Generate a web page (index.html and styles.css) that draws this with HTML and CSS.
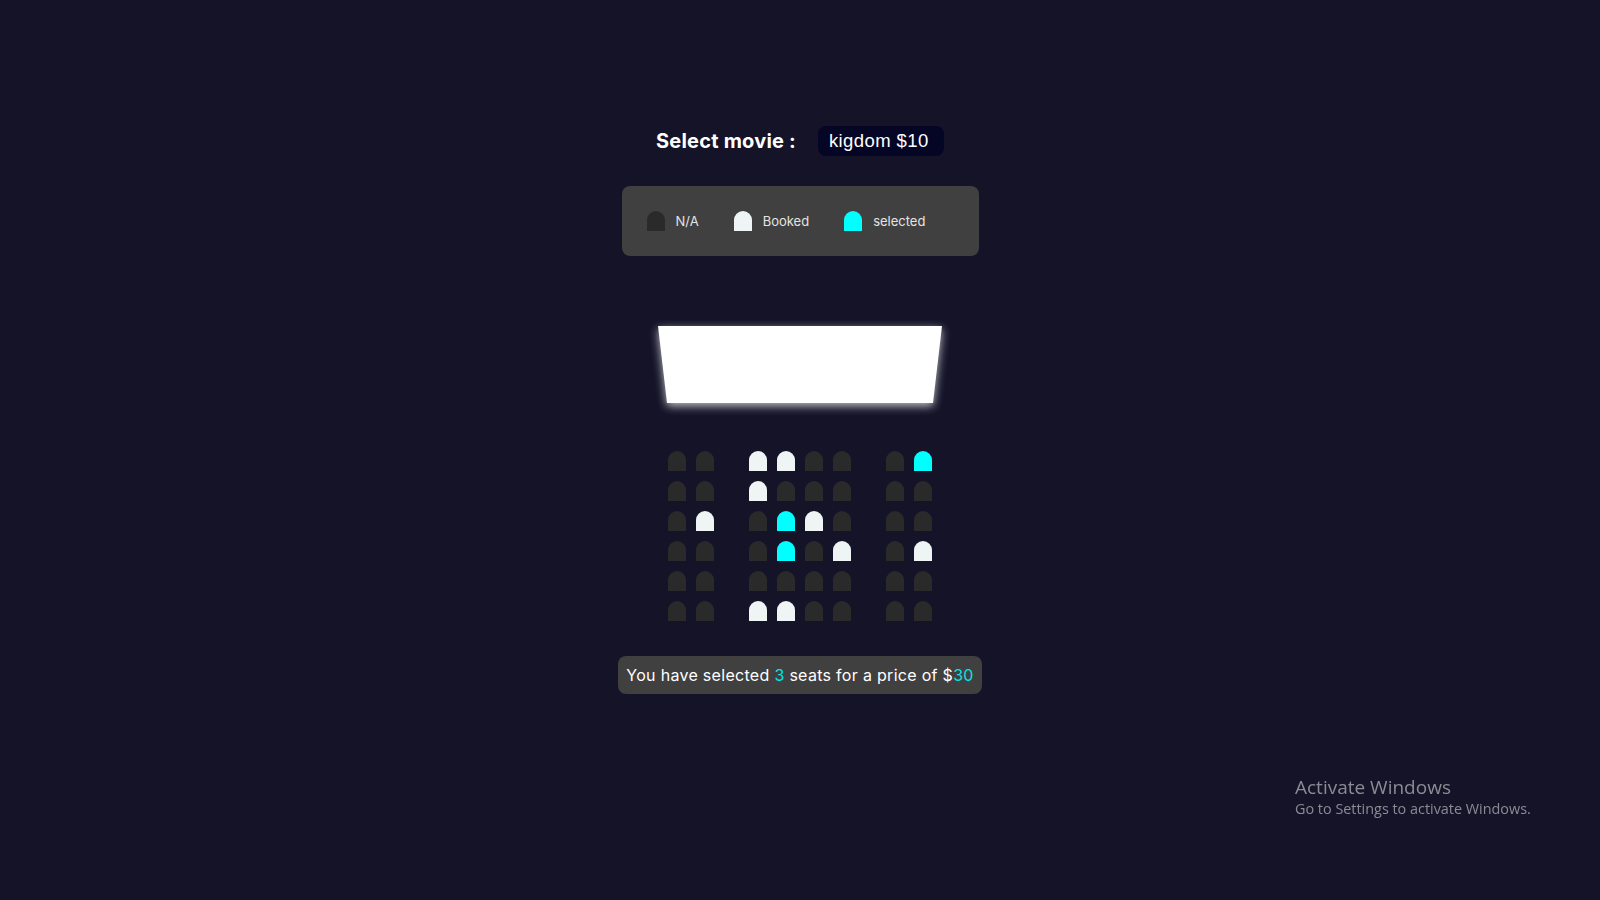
FILE: index.html
```html
<!DOCTYPE html>
<html lang="en">
<head>
<meta charset="utf-8">
<title>Movie Seat Booking</title>
<link rel="stylesheet" href="styles.css">
</head>
<body>
  <main class="app">
    <div class="movie-row">
      <label class="movie-label">Select movie :</label>
      <div class="movie-select">kigdom $10</div>
    </div>

    <ul class="legend">
      <li class="legend-item"><span class="seat seat--na"></span><small>N/A</small></li>
      <li class="legend-item"><span class="seat seat--booked"></span><small>Booked</small></li>
      <li class="legend-item"><span class="seat seat--selected"></span><small>selected</small></li>
    </ul>

    <div class="screen-wrap"><div class="screen"></div></div>

    <div class="hall">
      <div class="row">
        <span class="seat seat--na"></span><span class="seat seat--na"></span><span class="seat seat--booked"></span><span class="seat seat--booked"></span><span class="seat seat--na"></span><span class="seat seat--na"></span><span class="seat seat--na"></span><span class="seat seat--selected"></span>
      </div>
      <div class="row">
        <span class="seat seat--na"></span><span class="seat seat--na"></span><span class="seat seat--booked"></span><span class="seat seat--na"></span><span class="seat seat--na"></span><span class="seat seat--na"></span><span class="seat seat--na"></span><span class="seat seat--na"></span>
      </div>
      <div class="row">
        <span class="seat seat--na"></span><span class="seat seat--booked"></span><span class="seat seat--na"></span><span class="seat seat--selected"></span><span class="seat seat--booked"></span><span class="seat seat--na"></span><span class="seat seat--na"></span><span class="seat seat--na"></span>
      </div>
      <div class="row">
        <span class="seat seat--na"></span><span class="seat seat--na"></span><span class="seat seat--na"></span><span class="seat seat--selected"></span><span class="seat seat--na"></span><span class="seat seat--booked"></span><span class="seat seat--na"></span><span class="seat seat--booked"></span>
      </div>
      <div class="row">
        <span class="seat seat--na"></span><span class="seat seat--na"></span><span class="seat seat--na"></span><span class="seat seat--na"></span><span class="seat seat--na"></span><span class="seat seat--na"></span><span class="seat seat--na"></span><span class="seat seat--na"></span>
      </div>
      <div class="row">
        <span class="seat seat--na"></span><span class="seat seat--na"></span><span class="seat seat--booked"></span><span class="seat seat--booked"></span><span class="seat seat--na"></span><span class="seat seat--na"></span><span class="seat seat--na"></span><span class="seat seat--na"></span>
      </div>
    </div>

    <div class="summary"><p class="summary-text">You have selected <span class="hl">3</span> seats for a price of $<span class="hl">30</span></p></div>
  </main>

  <div class="watermark">
    <div class="wm-title">Activate Windows</div>
    <div class="wm-sub">Go to Settings to activate Windows.</div>
  </div>
</body>
</html>
```

FILE: styles.css
```css
* { box-sizing: border-box; }

html, body {
  margin: 0;
  padding: 0;
  height: 100%;
}

body {
  background: #141328;
  color: #fff;
  font-family: "Inter", "Open Sans", sans-serif;
  overflow: hidden;
}

.app {
  display: flex;
  flex-direction: column;
  align-items: center;
  padding-top: 126px;
}

.movie-row {
  display: flex;
  align-items: center;
  gap: 22px;
  height: 30px;
}

.movie-label {
  font-size: 20px;
  font-weight: 700;
  letter-spacing: 0.2px;
  color: #fff;
}

.movie-select {
  width: 126px;
  height: 30px;
  background: #050626;
  border-radius: 8px;
  display: flex;
  align-items: center;
  padding-left: 11px;
  font-family: "Liberation Sans", Arial, sans-serif;
  font-size: 18.5px;
  letter-spacing: 0.4px;
  color: #fff;
}

.legend {
  list-style: none;
  margin: 30px 0 0;
  width: 357px;
  height: 70px;
  padding: 0 25px;
  background: #404040;
  border-radius: 8px;
  display: flex;
  align-items: center;
  gap: 35px;
}

.legend-item {
  display: flex;
  align-items: center;
  gap: 11px;
}

.legend-item .seat { margin: 0; }

.legend-item small {
  font-size: 13px;
  color: #e4e4e4;
}

.screen-wrap {
  margin-top: 70px;
  filter: drop-shadow(0 3px 5px rgba(255, 255, 255, 0.75));
}

.screen {
  width: 284px;
  height: 77px;
  background: #fff;
  clip-path: polygon(0 0, 100% 0, calc(100% - 9px) 100%, 9px 100%);
}

.hall {
  margin-top: 43px;
  display: flex;
  flex-direction: column;
}

.row {
  display: flex;
}

.seat {
  display: block;
  width: 18px;
  height: 20px;
  margin: 5px;
  border-radius: 9px 9px 0 0;
  background: #2a2a2a;
}

.row .seat:nth-child(2) { margin-right: 30px; }
.row .seat:nth-child(7) { margin-left: 30px; }

.seat--na { background: #2a2a2a; }
.seat--booked { background: #eef5f4; }
.seat--selected { background: #00ffff; }

.summary {
  margin-top: 30px;
  height: 38px;
  width: 364px;
  background: #404040;
  border-radius: 8px;
  display: flex;
  align-items: center;
  justify-content: center;
}

.summary-text {
  margin: 0;
  font-size: 16px;
  letter-spacing: 0.3px;
  color: #fff;
  white-space: nowrap;
}

.hl { color: #00e5e8; }

.watermark {
  position: fixed;
  left: 1295px;
  top: 776px;
  color: #8b8b95;
  font-family: "Open Sans", "Noto Sans", sans-serif;
}

.wm-title {
  font-size: 19px;
  line-height: 23px;
}

.wm-sub {
  font-size: 14.4px;
  line-height: 20px;
}
```
